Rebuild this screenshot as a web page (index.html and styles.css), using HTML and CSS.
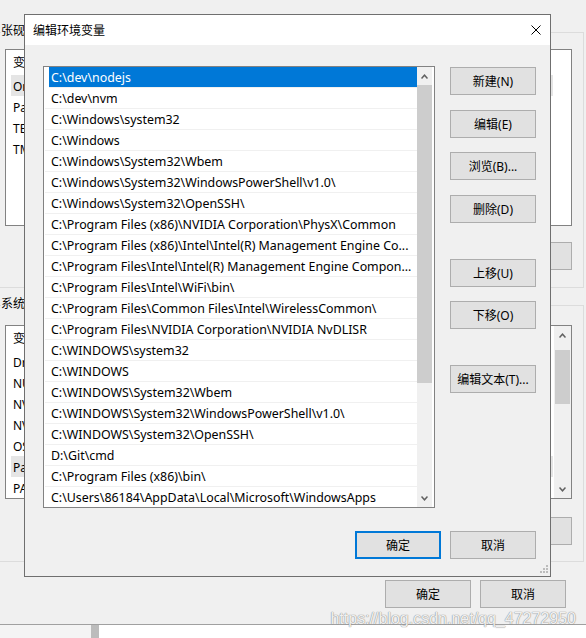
FILE: index.html
```html
<!DOCTYPE html>
<html lang="zh-CN">
<head>
  <meta charset="UTF-8" />
  <meta name="viewport" content="width=device-width, initial-scale=1.0"/>
  <title>编辑环境变量</title>
  <link rel="stylesheet" href="styles.css">
</head>
<body>

  <!-- ======= 环境变量窗口（后面） ======= -->
  <div class="desk">
    <div class="group group-user">
      <div class="group-title">张砚的用户变量(U)</div>
      <div class="varlist list-user">
        <div class="var-head">变量</div>
        <div class="var-row dim">OneDrive</div>
        <div class="var-row">Path</div>
        <div class="var-row">TEMP</div>
        <div class="var-row">TMP</div>
      </div>
      <div class="btn-row">
        <button class="btn">新建(N)...</button>
        <button class="btn">编辑(E)...</button>
        <button class="btn">删除(D)</button>
      </div>
    </div>

    <div class="group group-sys">
      <div class="group-title">系统变量(S)</div>
      <div class="varlist list-sys">
        <div class="var-body">
          <div class="var-head">变量</div>
          <div class="var-row">DriverData</div>
          <div class="var-row">NUMBER_OF_PROCESSORS</div>
          <div class="var-row">NVCUDASAMPLES_ROOT</div>
          <div class="var-row">NVTOOLSEXT_PATH</div>
          <div class="var-row">OS</div>
          <div class="var-row dim">Path</div>
          <div class="var-row">PATHEXT</div>
        </div>
        <div class="scroll scroll-sys">
          <div class="scroll-btn"><svg width="7" height="5" viewBox="0 0 7 5"><polyline points="0.5,4.5 3.5,1.2 6.5,4.5" fill="none" stroke="#606060" stroke-width="1.5"/></svg></div>
          <div class="thumb thumb-sys"></div>
          <div class="fill"></div>
          <div class="scroll-btn"><svg width="7" height="5" viewBox="0 0 7 5"><polyline points="0.5,0.5 3.5,3.8 6.5,0.5" fill="none" stroke="#606060" stroke-width="1.5"/></svg></div>
        </div>
      </div>
      <div class="btn-row btn-row-sys">
        <button class="btn">新建(W)...</button>
        <button class="btn">编辑(I)...</button>
        <button class="btn">删除(L)</button>
      </div>
    </div>

    <div class="desk-actions">
      <button class="btn">确定</button>
      <button class="btn">取消</button>
    </div>

    <div class="strip">
      <div class="strip-left"></div>
      <div class="strip-bar"></div>
      <div class="strip-rest"></div>
    </div>
  </div>

  <!-- ======= 编辑环境变量 对话框 ======= -->
  <div class="dialog">
    <div class="dialog-title">
      <span>编辑环境变量</span>
      <svg class="close" width="10" height="10" viewBox="0 0 10 10">
        <line x1="0.5" y1="0.5" x2="9.5" y2="9.5" stroke="#000" stroke-width="1"/>
        <line x1="9.5" y1="0.5" x2="0.5" y2="9.5" stroke="#000" stroke-width="1"/>
      </svg>
    </div>

    <div class="dialog-body">
      <div class="dialog-main">
        <div class="pathlist">
          <div class="rows">
            <div class="row sel">C:\dev\nodejs</div>
            <div class="row">C:\dev\nvm</div>
            <div class="row">C:\Windows\system32</div>
            <div class="row">C:\Windows</div>
            <div class="row">C:\Windows\System32\Wbem</div>
            <div class="row">C:\Windows\System32\WindowsPowerShell\v1.0\</div>
            <div class="row">C:\Windows\System32\OpenSSH\</div>
            <div class="row">C:\Program Files (x86)\NVIDIA Corporation\PhysX\Common</div>
            <div class="row">C:\Program Files (x86)\Intel\Intel(R) Management Engine Co...</div>
            <div class="row">C:\Program Files\Intel\Intel(R) Management Engine Compon...</div>
            <div class="row">C:\Program Files\Intel\WiFi\bin\</div>
            <div class="row">C:\Program Files\Common Files\Intel\WirelessCommon\</div>
            <div class="row">C:\Program Files\NVIDIA Corporation\NVIDIA NvDLISR</div>
            <div class="row">C:\WINDOWS\system32</div>
            <div class="row">C:\WINDOWS</div>
            <div class="row">C:\WINDOWS\System32\Wbem</div>
            <div class="row">C:\WINDOWS\System32\WindowsPowerShell\v1.0\</div>
            <div class="row">C:\WINDOWS\System32\OpenSSH\</div>
            <div class="row">D:\Git\cmd</div>
            <div class="row">C:\Program Files (x86)\bin\</div>
            <div class="row">C:\Users\86184\AppData\Local\Microsoft\WindowsApps</div>
          </div>
          <div class="scroll">
            <div class="scroll-btn"><svg width="7" height="5" viewBox="0 0 7 5"><polyline points="0.5,4.5 3.5,1.2 6.5,4.5" fill="none" stroke="#606060" stroke-width="1.5"/></svg></div>
            <div class="thumb"></div>
            <div class="fill"></div>
            <div class="scroll-btn"><svg width="7" height="5" viewBox="0 0 7 5"><polyline points="0.5,0.5 3.5,3.8 6.5,0.5" fill="none" stroke="#606060" stroke-width="1.5"/></svg></div>
          </div>
        </div>

        <div class="side">
          <button class="btn">新建(N)</button>
          <button class="btn">编辑(E)</button>
          <button class="btn tight">浏览(B)...</button>
          <button class="btn">删除(D)</button>
          <button class="btn apart">上移(U)</button>
          <button class="btn tight">下移(O)</button>
          <button class="btn apart">编辑文本(T)...</button>
        </div>
      </div>

      <div class="dialog-foot">
        <button class="btn primary">确定</button>
        <button class="btn">取消</button>
      </div>
    </div>

    <svg class="grip" width="9" height="9" viewBox="0 0 9 9">
      <rect x="6" y="0" width="2" height="2" fill="#bcbcbc"/>
      <rect x="3" y="3" width="2" height="2" fill="#bcbcbc"/>
      <rect x="6" y="3" width="2" height="2" fill="#bcbcbc"/>
      <rect x="0" y="6" width="2" height="2" fill="#bcbcbc"/>
      <rect x="3" y="6" width="2" height="2" fill="#bcbcbc"/>
      <rect x="6" y="6" width="2" height="2" fill="#bcbcbc"/>
    </svg>
  </div>

  <div class="watermark">https://blog.csdn.net/qq_47272950</div>

</body>
</html>
```

FILE: styles.css
```css
body {
  margin: 0;
  width: 586px;
  height: 638px;
  overflow: hidden;
  position: relative;
  background: #f0f0f0;
  font-family: "Noto Sans", "Noto Sans CJK SC", sans-serif;
  font-size: 12px;
  color: #000;
}

/* ===== 通用按钮 ===== */
.btn {
  box-sizing: border-box;
  width: 86px;
  height: 28px;
  margin: 0;
  padding: 0;
  background: #e1e1e1;
  border: 1px solid #adadad;
  font: inherit;
  color: #000;
  white-space: nowrap;
}

.btn.primary {
  border: 2px solid #0078d7;
}

/* ===== 后面的窗口 ===== */
.desk {
  display: flex;
  flex-direction: column;
  height: 638px;
}

.group {
  box-sizing: border-box;
  margin: 0 2px 0 -8px;
  padding: 0 11px 0 12px;
  border: 1px solid #dcdcdc;
  display: flex;
  flex-direction: column;
}

.group-user {
  margin-top: 32px;
  height: 256px;
}

.group-sys {
  margin-top: 17px;
  height: 257px;
}

.group-title {
  align-self: flex-start;
  margin: -10px 0 0 -4px;
  height: 16px;
  line-height: 16px;
  padding-right: 2px;
  background: #f0f0f0;
}

.varlist {
  box-sizing: border-box;
  border: 1px solid #828282;
  background: #fff;
  overflow: hidden;
}

.list-user {
  margin-top: 10px;
  height: 177px;
}

.list-sys {
  margin-top: 13px;
  height: 174px;
  display: flex;
}

.var-body {
  flex: 1;
  overflow: hidden;
}

.var-head {
  height: 25px;
  line-height: 25px;
  padding-left: 7px;
  white-space: nowrap;
}

.var-row {
  box-sizing: border-box;
  height: 21px;
  padding: 2px 0 0 2px;
  line-height: 19px;
  margin-left: 5px;
  white-space: nowrap;
  overflow: hidden;
}

/* 失去焦点时的选中行，只铺到第一列 */
.var-row.dim {
  background: linear-gradient(to right, #e5e5e5 542px, transparent 542px);
}

.btn-row {
  display: flex;
  justify-content: flex-end;
  gap: 8px;
  margin-top: 16px;
}

.btn-row-sys {
  margin-top: 18px;
}

.desk-actions {
  display: flex;
  justify-content: flex-end;
  gap: 9px;
  margin-top: 18px;
  padding-right: 20px;
}

.strip {
  margin-top: 16px;
  flex: 1;
  border-top: 1px solid #a0a0a0;
  display: flex;
}

.strip-left {
  width: 91px;
  background: #f4f4f4;
}

.strip-bar {
  width: 8px;
  background: #bcbcbc;
}

.strip-rest {
  flex: 1;
  background: #fff;
}

/* ===== 滚动条 ===== */
.scroll {
  width: 15px;
  margin-right: 2px;
  background: #f0f0f0;
  display: flex;
  flex-direction: column;
}

.scroll-btn {
  height: 18px;
  display: flex;
  align-items: center;
  justify-content: center;
}

.thumb {
  height: 298px;
  background: #cdcdcd;
}

.fill {
  flex: 1;
}

.scroll-sys {
  width: 17px;
  margin-right: 0;
}

.thumb-sys {
  height: 54px;
  margin: 6px 1px 0;
}

/* ===== 对话框 ===== */
.dialog {
  position: absolute;
  left: 24px;
  top: 14px;
  width: 527px;
  height: 563px;
  box-sizing: border-box;
  border: 1px solid #6f6f6f;
  background: #f0f0f0;
  display: flex;
  flex-direction: column;
}

.dialog-title {
  height: 30px;
  background: #fff;
  display: flex;
  align-items: center;
  justify-content: space-between;
  padding: 0 9px 0 8px;
}

.dialog-body {
  flex: 1;
  padding: 21px 14px 0 18px;
  display: flex;
  flex-direction: column;
}

.dialog-main {
  display: flex;
  gap: 15px;
}

.pathlist {
  box-sizing: border-box;
  width: 392px;
  height: 442px;
  border: 1px solid #828282;
  background: #fff;
  display: flex;
}

.rows {
  flex: 1;
  padding-left: 1px;
  overflow: hidden;
}

.row {
  box-sizing: border-box;
  height: 21px;
  padding: 2px 0 0 6px;
  line-height: 18px;
  font-size: 12.4px;
  border-bottom: 1px solid #f0f0f0;
  white-space: nowrap;
  overflow: hidden;
}

.row.sel {
  margin-left: 4px;
  padding-left: 2px;
  background: #0078d7;
  color: #fff;
}

.side {
  display: flex;
  flex-direction: column;
  padding-top: 1px;
}

.side .btn + .btn {
  margin-top: 15px;
}

.side .btn.tight {
  margin-top: 14px;
}

.side .btn.apart {
  margin-top: 36px;
}

.dialog-foot {
  display: flex;
  justify-content: flex-end;
  gap: 9px;
  margin-top: 23px;
}

.grip {
  position: absolute;
  right: 1px;
  bottom: 2px;
}

/* ===== 水印 ===== */
.watermark {
  position: absolute;
  right: 10px;
  top: 610px;
  font-family: "Liberation Sans", Arial, sans-serif;
  font-size: 16px;
  color: rgba(255, 255, 255, 0.9);
  text-shadow: 0 0 1px #8a8a8a, 0 0 1px #8a8a8a;
}
```
